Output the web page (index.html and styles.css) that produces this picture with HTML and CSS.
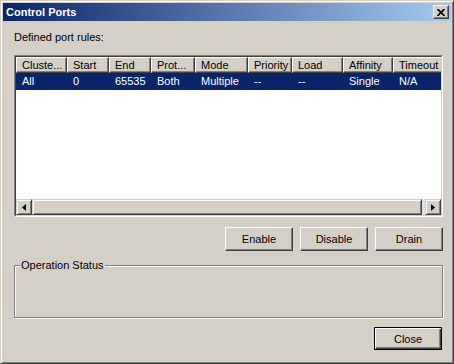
FILE: index.html
```html
<!DOCTYPE html>
<html lang="en">
<head>
    <meta charset="UTF-8">
    <title>Control Ports</title>
    <link rel="stylesheet" href="styles.css">
</head>
<body>
    <div class="window">
        <div class="titlebar">
            <span class="title">Control Ports</span>
            <button class="tb-close" aria-label="Close">
                <svg width="8" height="7" viewBox="0 0 8 7"><path d="M0.5 0 L7.5 7 M7.5 0 L0.5 7" stroke="#000" stroke-width="1.7" fill="none"/></svg>
            </button>
        </div>
        <div class="content">
            <div class="label">Defined port rules:</div>
            <div class="listview">
                <div class="lv-inner">
                    <div class="lv-header">
                        <div class="hcell c1">Cluste...</div>
                        <div class="hcell c2">Start</div>
                        <div class="hcell c3">End</div>
                        <div class="hcell c4">Prot...</div>
                        <div class="hcell c5">Mode</div>
                        <div class="hcell c6">Priority</div>
                        <div class="hcell c7">Load</div>
                        <div class="hcell c8">Affinity</div>
                        <div class="hcell c9">Timeout</div>
                    </div>
                    <div class="lv-body">
                        <div class="lv-row selected">
                            <div class="cell c1">All</div>
                            <div class="cell c2">0</div>
                            <div class="cell c3">65535</div>
                            <div class="cell c4">Both</div>
                            <div class="cell c5">Multiple</div>
                            <div class="cell c6">--</div>
                            <div class="cell c7">--</div>
                            <div class="cell c8">Single</div>
                            <div class="cell c9">N/A</div>
                        </div>
                    </div>
                    <div class="hscroll">
                        <div class="sb-btn">
                            <svg width="4" height="7" viewBox="0 0 4 7"><path d="M4 0 L0 3.5 L4 7 Z" fill="#000"/></svg>
                        </div>
                        <div class="sb-thumb"></div>
                        <div class="sb-track"></div>
                        <div class="sb-btn">
                            <svg width="4" height="7" viewBox="0 0 4 7"><path d="M0 0 L4 3.5 L0 7 Z" fill="#000"/></svg>
                        </div>
                    </div>
                </div>
            </div>
            <div class="actions">
                <button class="btn">Enable</button>
                <button class="btn">Disable</button>
                <button class="btn">Drain</button>
            </div>
            <fieldset class="group">
                <legend>Operation Status</legend>
                <div class="group-body"></div>
            </fieldset>
            <div class="footer">
                <button class="btn default">Close</button>
            </div>
        </div>
    </div>
</body>
</html>
```

FILE: styles.css
```css
body {
    margin: 0;
    font-family: "Liberation Sans", Arial, sans-serif;
    font-size: 11px;
    color: #000;
    background-color: #d4d0c8;
}
.window {
    width: 454px;
    height: 364px;
    box-sizing: border-box;
    background-color: #d4d0c8;
    border: 1px solid;
    border-color: #d4d0c8 #404040 #404040 #d4d0c8;
    box-shadow: inset 1px 1px #fff, inset -1px -1px #808080;
    padding: 2px;
}
.titlebar {
    height: 18px;
    display: flex;
    align-items: center;
    justify-content: space-between;
    padding: 0 2px 0 3px;
    background: linear-gradient(to right, #0a246a, #a6caf0);
}
.title {
    color: #fff;
    font-weight: bold;
    font-size: 11px;
}
.tb-close {
    width: 16px;
    height: 14px;
    padding: 0;
    display: flex;
    align-items: center;
    justify-content: center;
    background-color: #d4d0c8;
    border: 1px solid;
    border-color: #fff #404040 #404040 #fff;
    box-shadow: inset -1px -1px #808080;
}
.content {
    padding: 10px 8px 0 11px;
}
.label {
    line-height: 13px;
    margin-bottom: 11px;
}
.listview {
    height: 162px;
    box-sizing: border-box;
    border: 1px solid;
    border-color: #808080 #fff #fff #808080;
}
.lv-inner {
    height: 100%;
    box-sizing: border-box;
    border: 1px solid;
    border-color: #404040 #d4d0c8 #d4d0c8 #404040;
    background-color: #fff;
    display: flex;
    flex-direction: column;
    overflow: hidden;
}
.lv-header, .lv-row {
    display: flex;
    flex: none;
}
.hcell {
    flex: none;
    height: 16px;
    box-sizing: border-box;
    padding-left: 5px;
    line-height: 14px;
    background-color: #d4d0c8;
    border: 1px solid;
    border-color: #fff #404040 #404040 #fff;
    box-shadow: inset -1px -1px #808080;
    white-space: nowrap;
    overflow: hidden;
}
.lv-body {
    flex: 1;
}
.lv-row {
    height: 17px;
    line-height: 17px;
}
.lv-row.selected {
    background-color: #0a246a;
    color: #fff;
}
.cell {
    flex: none;
    box-sizing: border-box;
    padding-left: 6px;
    white-space: nowrap;
}
.c1 { width: 51px; }
.c2 { width: 42px; }
.c3 { width: 42px; }
.c4 { width: 44px; }
.c5 { width: 53px; }
.c6 { width: 44px; }
.c7 { width: 51px; }
.c8 { width: 50px; }
.c9 { width: 50px; }
.hscroll {
    height: 16px;
    flex: none;
    display: flex;
}
.sb-btn, .sb-thumb {
    box-sizing: border-box;
    background-color: #d4d0c8;
    border: 1px solid;
    border-color: #d4d0c8 #404040 #404040 #d4d0c8;
    box-shadow: inset 1px 1px #fff, inset -1px -1px #808080;
}
.sb-btn {
    width: 16px;
    display: flex;
    align-items: center;
    justify-content: center;
}
.sb-thumb {
    flex: 1;
}
.sb-track {
    width: 3px;
    background: repeating-conic-gradient(#fff 0 25%, #d4d0c8 0 50%) 0 0 / 2px 2px;
}
.actions {
    display: flex;
    justify-content: flex-end;
    gap: 7px;
    margin-top: 10px;
}
.btn {
    width: 68px;
    height: 24px;
    padding: 0;
    font-family: inherit;
    font-size: 11px;
    color: #000;
    background-color: #d4d0c8;
    border: 1px solid;
    border-color: #fff #404040 #404040 #fff;
    box-shadow: inset -1px -1px #808080;
}
.group {
    margin: 8px 0 0;
    padding: 0 5px;
    border: 1px solid #808080;
    box-shadow: 1px 1px 0 #fff, inset 1px 1px 0 #fff;
}
.group legend {
    padding: 0 1px;
    line-height: 13px;
    background-color: #d4d0c8;
}
.group-body {
    height: 45px;
}
.footer {
    display: flex;
    justify-content: flex-end;
    margin-top: 9px;
    padding-right: 1px;
}
.btn.default {
    height: 23px;
    border: 1px solid #000;
    box-shadow: inset 1px 1px #fff, inset -1px -1px #404040, inset -2px -2px #808080;
}
```
